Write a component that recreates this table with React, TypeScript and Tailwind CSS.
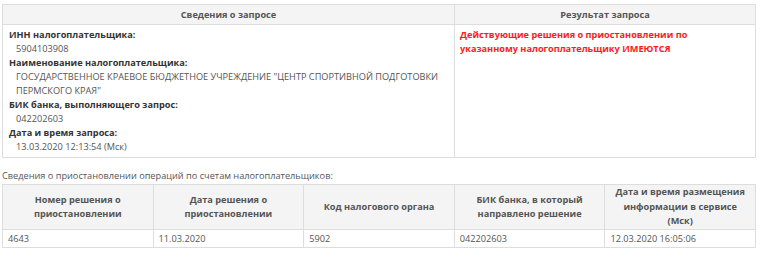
export default function App() {
  const font = { fontFamily: '"Open Sans", "Liberation Sans", sans-serif' };
  const th = "border border-[#dddddd] bg-[#f4f4f4] font-bold text-[#555555] text-center align-middle px-2";
  const td = "border border-[#dddddd] text-[#555555] px-[5px] h-[18px] align-middle";
  return (
    <div className="w-[760px] h-[255px] bg-white text-[9.2px] leading-[14px] pl-[2px] pt-[4px]" style={font}>
      <table className="w-[754px] border-collapse table-fixed">
        <colgroup>
          <col className="w-[452px]" />
          <col />
        </colgroup>
        <thead>
          <tr>
            <th className={`${th} h-[20px]`}>Сведения о запросе</th>
            <th className={`${th} h-[20px]`}>Результат запроса</th>
          </tr>
        </thead>
        <tbody>
          <tr>
            <td className="border border-[#dddddd] align-top px-[6px] pt-[3px] pb-[3px]">
              <div className="font-bold text-[#333333]">ИНН налогоплательщика:</div>
              <div className="pl-[7px] text-[#555555]">5904103908</div>
              <div className="font-bold text-[#333333]">Наименование налогоплательщика:</div>
              <div className="pl-[7px] text-[#555555]">
                ГОСУДАРСТВЕННОЕ КРАЕВОЕ БЮДЖЕТНОЕ УЧРЕЖДЕНИЕ "ЦЕНТР СПОРТИВНОЙ ПОДГОТОВКИ ПЕРМСКОГО КРАЯ"
              </div>
              <div className="font-bold text-[#333333]">БИК банка, выполняющего запрос:</div>
              <div className="pl-[7px] text-[#555555]">042202603</div>
              <div className="font-bold text-[#333333]">Дата и время запроса:</div>
              <div className="pl-[7px] text-[#555555]">13.03.2020 12:13:54 (Мск)</div>
            </td>
            <td className="border border-[#dddddd] align-top px-[5px] pt-[3px] font-bold text-[#ff1a1a]">
              <div className="w-[240px]">
                Действующие решения о приостановлении по указанному налогоплательщику ИМЕЮТСЯ
              </div>
            </td>
          </tr>
        </tbody>
      </table>
      <div className="mt-[11px] mb-[1px] text-[#555555]">
        Сведения о приостановлении операций по счетам налогоплательщиков:
      </div>
      <table className="w-[754px] border-collapse table-fixed">
        <thead>
          <tr>
            <th className={`${th} h-[45px] leading-[14.5px]`}>Номер решения о приостановлении</th>
            <th className={`${th} leading-[14.5px]`}>Дата решения о приостановлении</th>
            <th className={`${th} leading-[14.5px]`}>Код налогового органа</th>
            <th className={`${th} leading-[14.5px]`}>БИК банка, в который направлено решение</th>
            <th className={`${th} leading-[14.5px]`}>Дата и время размещения информации в сервисе (Мск)</th>
          </tr>
        </thead>
        <tbody>
          <tr>
            <td className={td}>4643</td>
            <td className={td}>11.03.2020</td>
            <td className={td}>5902</td>
            <td className={td}>042202603</td>
            <td className={td}>12.03.2020 16:05:06</td>
          </tr>
        </tbody>
      </table>
    </div>
  );
}
